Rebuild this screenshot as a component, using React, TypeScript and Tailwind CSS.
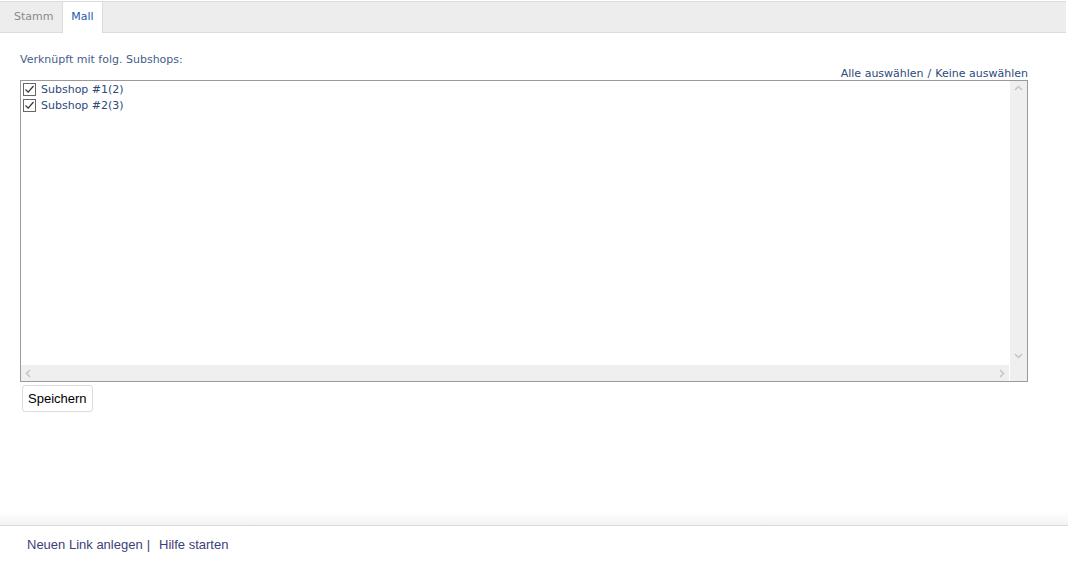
import { useState } from "react";

const tahoma = { fontFamily: '"DejaVu Sans", Tahoma, sans-serif' };

function CheckRow({ label, checked, onToggle }: { label: string; checked: boolean; onToggle: () => void }) {
  return (
    <label className="flex h-[16px] cursor-pointer items-center gap-[5px] text-[11px] leading-none text-[#2c4a7a]">
      <span
        onClick={onToggle}
        className="flex h-[13px] w-[13px] items-center justify-center border border-[#666] bg-white"
      >
        {checked && (
          <svg width="11" height="11" viewBox="0 0 11 11" fill="none">
            <path d="M1.5 5.5 L4.2 8.2 L9.5 2" stroke="#333" strokeWidth="1.2" />
          </svg>
        )}
      </span>
      <span>{label}</span>
    </label>
  );
}

export default function App() {
  const [checks, setChecks] = useState([true, true]);
  const toggle = (i: number) => setChecks((c) => c.map((v, j) => (j === i ? !v : v)));
  const setAll = (v: boolean) => setChecks([v, v]);

  return (
    <div className="flex h-[564px] w-[1068px] flex-col bg-white" style={tahoma}>
      <div className="mt-[1px] flex h-[32px] w-[1066px] border-t border-b border-[#dcdcdc] bg-[#ededed]">
        <div className="flex w-[62px] items-center pl-[14px] text-[11px] text-[#8a8a8a]">Stamm</div>
        <div className="-mb-[1px] flex w-[41px] items-center justify-center border-x border-[#dcdcdc] bg-white text-[11px] text-[#1e5aa8]">
          Mall
        </div>
      </div>

      <div className="flex-1 px-[20px]">
        <div className="mt-[20px] text-[11px] leading-[14px] text-[#44608a]">Verknüpft mit folg. Subshops:</div>
        <div className="mt-[1px] flex w-[1008px] justify-end text-[11px] leading-[12px] text-[#2c4a7a]">
          <span className="cursor-pointer" onClick={() => setAll(true)}>Alle auswählen</span>
          <span className="px-[4px]">/</span>
          <span className="cursor-pointer" onClick={() => setAll(false)}>Keine auswählen</span>
        </div>
        <div className="flex h-[302px] w-[1008px] border border-[#9a9a9a]">
          <div className="flex flex-1 flex-col">
            <div className="flex-1 pl-[2px]">
              <CheckRow label="Subshop #1(2)" checked={checks[0]} onToggle={() => toggle(0)} />
              <CheckRow label="Subshop #2(3)" checked={checks[1]} onToggle={() => toggle(1)} />
            </div>
            <div className="mr-[1px] flex h-[16px] items-center justify-between bg-[#efefef] px-[4px]">
              <svg width="6" height="9" viewBox="0 0 6 9"><path d="M5 1 L1.5 4.5 L5 8" stroke="#c4c4c4" strokeWidth="1.5" fill="none" /></svg>
              <svg width="6" height="9" viewBox="0 0 6 9"><path d="M1 1 L4.5 4.5 L1 8" stroke="#c4c4c4" strokeWidth="1.5" fill="none" /></svg>
            </div>
          </div>
          <div className="flex w-[17px] flex-col items-center bg-[#efefef] pt-[4px] pb-[22px]">
            <svg width="9" height="6" viewBox="0 0 9 6"><path d="M1 5 L4.5 1.5 L8 5" stroke="#c4c4c4" strokeWidth="1.5" fill="none" /></svg>
            <div className="flex-1" />
            <svg width="9" height="6" viewBox="0 0 9 6"><path d="M1 1 L4.5 4.5 L8 1" stroke="#c4c4c4" strokeWidth="1.5" fill="none" /></svg>
          </div>
        </div>
        <button
          type="button"
          className="mt-[3px] ml-[2px] h-[27px] rounded-[3px] border border-[#dcdcdc] bg-white px-[5px] text-[13px] text-black"
          style={{ fontFamily: '"Liberation Sans", Arial, sans-serif' }}
        >
          Speichern
        </button>
      </div>

      <div className="h-[14px] bg-gradient-to-b from-white to-[#f3f3f3]" />
      <div
        className="flex h-[39px] items-center border-t border-[#dadada] pl-[27px] text-[13px] text-[#3d3f7a]"
        style={{ fontFamily: '"Liberation Sans", Arial, sans-serif' }}
      >
        <span>Neuen Link anlegen</span>
        <span className="pl-[4px] pr-[9px]">|</span>
        <span>Hilfe starten</span>
      </div>
    </div>
  );
}
